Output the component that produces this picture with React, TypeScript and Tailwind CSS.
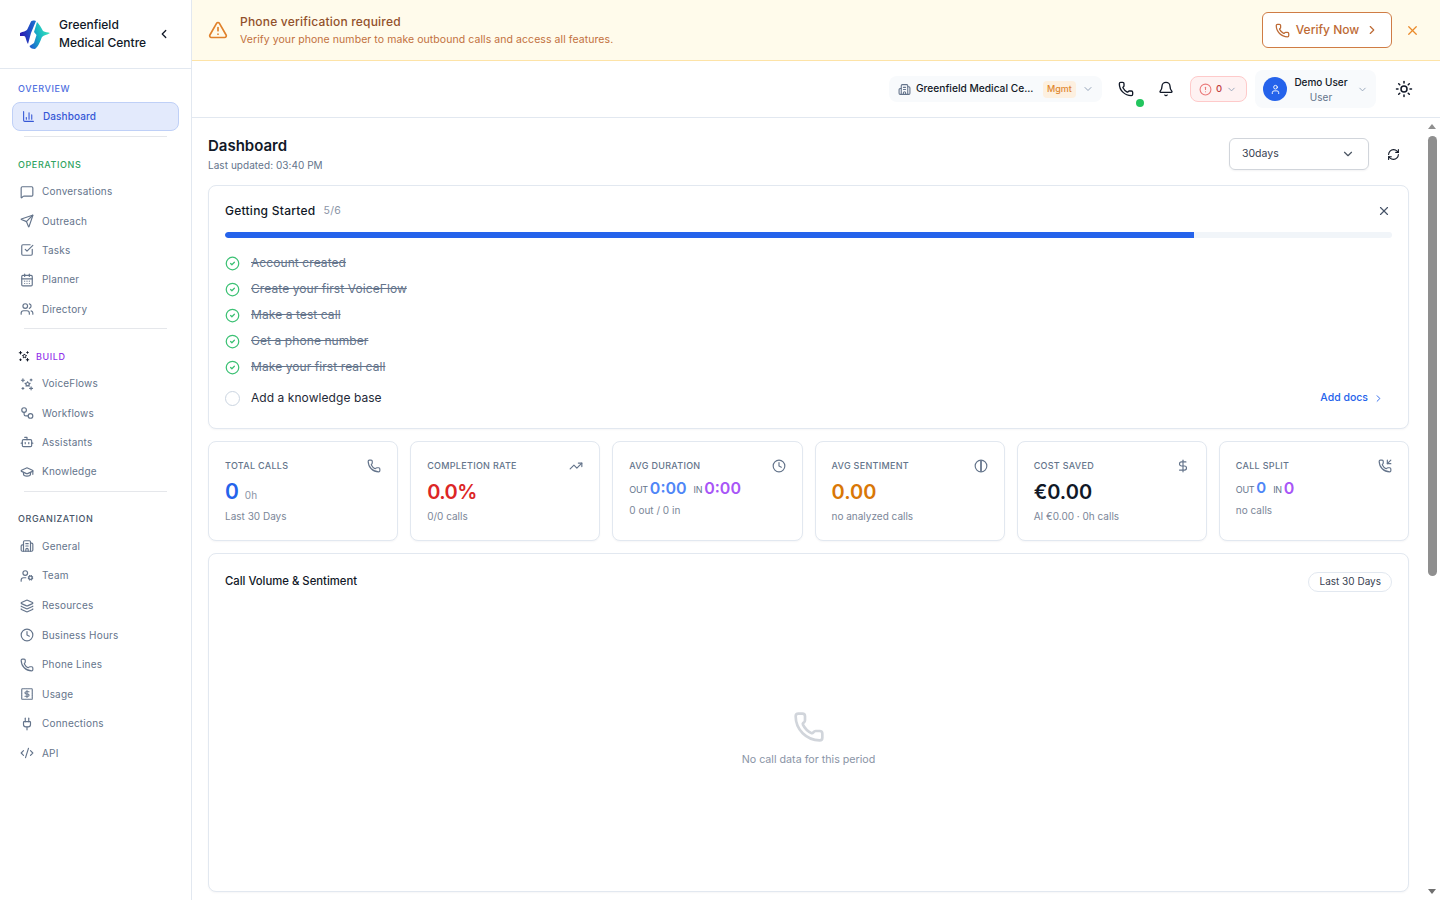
import {
  AlertTriangle, Bell, Bot, Building2, CalendarDays, ChartColumn, ChevronDown, ChevronLeft, ChevronRight,
  CircleAlert, CircleCheck, Clock, CodeXml, DollarSign, GraduationCap, Layers, MessageSquare, Phone,
  PhoneIncoming, Plug, RefreshCw, Send, SquareCheckBig, Sun, TrendingUp, User, UserCog, Users, X,
} from "lucide-react";

function Logo() {
  return (
    <svg width="32" height="32" viewBox="0 0 32 32" fill="none">
      <defs>
        <linearGradient id="lgA" x1="0" y1="0.6" x2="1" y2="0.3">
          <stop offset="0" stopColor="#2a17b0" />
          <stop offset="1" stopColor="#1a6fd0" />
        </linearGradient>
        <linearGradient id="lgB" x1="0" y1="0.8" x2="1" y2="0.3">
          <stop offset="0" stopColor="#1c5fd0" />
          <stop offset="0.5" stopColor="#18b6c4" />
          <stop offset="1" stopColor="#3fe9b8" />
        </linearGradient>
      </defs>
      <path d="M1 15C4 13 7 14 8.500 11L12 3.500C13 2.500 16 2 17 3L12 15L9 26C7 23 7 18 5 18L1 18Z" fill="url(#lgA)" />
      <path d="M18 4C20 6 22 9 24 13C26 14 29 14.500 31 15C28 17 25 17 23 19C21 24 19 29 16 31C13 31 11 30 10.500 28L15 25L17.500 17L15 14Z" fill="url(#lgB)" />
    </svg>
  );
}

function SparkIcon({ size = 14, className = "" }: { size?: number; className?: string }) {
  return (
    <svg width={size} height={size} viewBox="0 0 24 24" fill="none" stroke="currentColor" strokeWidth="2" strokeLinecap="round" className={className}>
      <path d="M13 8.500l1.600 1.900 2.400.6-1.600 2 .2 2.500-2.600-.8-2.400.8.1-2.500L9 11l2.400-.6z" />
      <path d="M5 3v5M2.500 5.500h5M19 3.500v3M17.500 5h3M5 18v3M3.500 19.500h3M19 17v5M16.500 19.500h5" />
    </svg>
  );
}

function FlowIcon({ size = 14 }: { size?: number }) {
  return (
    <svg width={size} height={size} viewBox="0 0 24 24" fill="none" stroke="currentColor" strokeWidth="2" strokeLinecap="round">
      <circle cx="7" cy="7" r="4" />
      <circle cx="18" cy="17" r="4" />
      <path d="M7 11v3a3 3 0 0 0 3 3h4" />
    </svg>
  );
}

function UsageIcon({ size = 14 }: { size?: number }) {
  return (
    <svg width={size} height={size} viewBox="0 0 24 24" fill="none" stroke="currentColor" strokeWidth="2" strokeLinecap="round">
      <rect x="3" y="3" width="18" height="18" rx="1" strokeDasharray="2 1" />
      <path d="M15.500 8H10.500a2 2 0 0 0 0 4h3a2 2 0 0 1 0 4H8.500M12 6v12" strokeWidth="1.800" />
    </svg>
  );
}

function SentimentIcon({ size = 14 }: { size?: number }) {
  return (
    <svg width={size} height={size} viewBox="0 0 24 24" fill="none" stroke="currentColor" strokeWidth="2">
      <circle cx="12" cy="12" r="10" />
      <path d="M12 2v20" strokeWidth="3" />
    </svg>
  );
}

const sections = [
  {
    label: "OPERATIONS",
    color: "text-[#2fa35f]",
    row: "h-[29.4px]",
    items: [
      { name: "Conversations", icon: <MessageSquare size={14} /> },
      { name: "Outreach", icon: <Send size={14} /> },
      { name: "Tasks", icon: <SquareCheckBig size={14} /> },
      { name: "Planner", icon: <CalendarDays size={14} /> },
      { name: "Directory", icon: <Users size={14} /> },
    ],
  },
  {
    label: "BUILD",
    color: "text-[#9333ea]",
    row: "h-[29.4px]",
    spark: true,
    items: [
      { name: "VoiceFlows", icon: <SparkIcon /> },
      { name: "Workflows", icon: <FlowIcon /> },
      { name: "Assistants", icon: <Bot size={14} /> },
      { name: "Knowledge", icon: <GraduationCap size={14} /> },
    ],
  },
  {
    label: "ORGANIZATION",
    color: "text-[#475569]",
    row: "h-[29.6px]",
    items: [
      { name: "General", icon: <Building2 size={14} /> },
      { name: "Team", icon: <UserCog size={14} /> },
      { name: "Resources", icon: <Layers size={14} /> },
      { name: "Business Hours", icon: <Clock size={14} /> },
      { name: "Phone Lines", icon: <Phone size={14} /> },
      { name: "Usage", icon: <UsageIcon /> },
      { name: "Connections", icon: <Plug size={14} /> },
      { name: "API", icon: <CodeXml size={14} /> },
    ],
  },
];

const steps = ["Account created", "Create your first VoiceFlow", "Make a test call", "Get a phone number", "Make your first real call"];

function Sidebar() {
  return (
    <aside className="w-[192px] shrink-0 h-full bg-white border-r border-[#e2e8f0] flex flex-col">
      <div className="h-[69px] shrink-0 border-b border-[#e2e8f0] flex items-center pl-[19px] pr-[20px]">
        <Logo />
        <div className="ml-2 flex-1 text-[12px] leading-[18px] font-medium text-[#111827]">Greenfield<br />Medical Centre</div>
        <ChevronLeft size={14} className="text-[#111827]" strokeWidth={2.2} />
      </div>
      <div className="px-3 flex-1">
        <div className="h-[40px] pl-[6px] pt-[14px] text-[9px] leading-[12px] tracking-[0.6px] font-medium text-[#4f6fe0]">OVERVIEW</div>
        <div className="h-[29px] -mt-[7px] rounded-lg bg-[#e3eafc] border border-[#bfd0f7] flex items-center pl-[9px] gap-[8px] text-[#3557d6]">
          <ChartColumn size={13} />
          <span className="text-[10px] font-medium tracking-[0.1px]">Dashboard</span>
        </div>
        <div className="h-px bg-[#e5e7eb] mx-3 mt-[5px]" />
        {sections.map((s, i) => (
          <div key={s.label}>
            <div className={`h-[13px] mt-[21px] pl-[6px] flex items-center gap-[6px] text-[9px] tracking-[0.6px] font-medium ${s.color}`}>
              {s.spark && <SparkIcon size={12} className="text-[#111827]" />}
              {s.label}
            </div>
            <div className="mt-[6px]">
              {s.items.map(item => (
                <div key={item.name} className={`${s.row} pl-[8px] flex items-center gap-[8px] text-[#64748b]`}>
                  <span className="w-[14px] flex justify-center">{item.icon}</span>
                  <span className="text-[10px] tracking-[0.2px]">{item.name}</span>
                </div>
              ))}
            </div>
            {i < 2 && <div className="h-px bg-[#e5e7eb] mx-3 mt-[4px]" />}
          </div>
        ))}
      </div>
    </aside>
  );
}

function Banner() {
  return (
    <div className="h-[61px] shrink-0 bg-[#fffbeb] border-b border-[#fde3a7] flex items-center pl-4 pr-[20px]">
      <AlertTriangle size={20} className="text-[#e0812b]" />
      <div className="ml-[12px] flex-1">
        <div className="text-[12px] leading-[16px] tracking-[0.2px] font-medium text-[#92512b]">Phone verification required</div>
        <div className="text-[10.5px] leading-[14px] mt-[3px] tracking-[0.07px] text-[#c2703d]">Verify your phone number to make outbound calls and access all features.</div>
      </div>
      <div className="w-[130px] h-[36px] rounded-md bg-white border border-[#cf7c45] flex items-center justify-center gap-[6px] text-[#bd6a35]">
        <Phone size={15} />
        <span className="text-[12px] font-medium">Verify Now</span>
        <ChevronRight size={14} />
      </div>
      <X size={15} className="ml-[13px] text-[#ea8a2a]" />
    </div>
  );
}

function TopBar() {
  return (
    <div className="h-[57px] shrink-0 bg-white border-b border-[#e2e8f0] flex items-center justify-end pr-[27px]">
      <div className="w-[213px] h-[26px] rounded-lg bg-[#f8fafc] flex items-center pl-[9px] text-[#111827]">
        <Building2 size={13} className="text-[#64748b]" />
        <span className="ml-[5px] text-[10.2px] font-medium w-[119px] whitespace-nowrap">Greenfield Medical Ce...</span>
        <span className="ml-[8px] h-[17px] px-[4px] rounded bg-[#fdf0e0] text-[#e0882f] text-[9px] font-medium flex items-center">Mgmt</span>
        <ChevronDown size={12} className="ml-[6px] text-[#94a3b8]" />
      </div>
      <div className="relative ml-[16px] w-[16px] h-[16px] text-[#111827]">
        <Phone size={16} />
        <span className="absolute left-[18px] top-[18px] w-[8px] h-[8px] rounded-full bg-[#22c55e]" />
      </div>
      <Bell size={16} className="ml-[24px] text-[#111827]" />
      <div className="ml-[16px] w-[57px] h-[26px] rounded-lg bg-[#fef2f2] border border-[#fecaca] flex items-center pl-[8px] text-[#c2413f]">
        <CircleAlert size={13} className="text-[#ea7a7a]" />
        <span className="ml-[4px] text-[9.5px] font-medium">0</span>
        <ChevronDown size={11} className="ml-[4px] text-[#94a3b8]" />
      </div>
      <div className="ml-[8px] w-[121px] h-[38px] rounded-lg bg-[#f8fafc] flex items-center pl-[8px]">
        <span className="w-[24px] h-[24px] rounded-full bg-[#2563eb] flex items-center justify-center text-white">
          <User size={11} />
        </span>
        <div className="ml-[7px] w-[54px] text-center whitespace-nowrap">
          <div className="text-[10px] leading-[14px] font-medium text-[#111827]">Demo User</div>
          <div className="text-[10px] leading-[14px] mt-[1px] text-[#64748b]">User</div>
        </div>
        <ChevronDown size={11} className="ml-[9px] text-[#94a3b8]" />
      </div>
      <Sun size={18} className="ml-[19px] text-[#111827]" />
    </div>
  );
}

function GettingStarted() {
  return (
    <div className="h-[244px] rounded-lg border border-[#e2e8f0] bg-white px-4 pt-[15px] shadow-[0_1px_2px_rgba(15,23,42,0.04)]">
      <div className="h-[20px] flex items-center">
        <span className="text-[12px] tracking-[0.25px] font-medium text-[#111827]">Getting Started</span>
        <span className="ml-2 text-[10.5px] tracking-[0.3px] text-[#8a94a6]">5/6</span>
        <X size={14} className="ml-auto mr-[1px] text-[#475569]" />
      </div>
      <div className="mt-[11px] h-[6px] rounded-full bg-[#f1f5f9] overflow-hidden">
        <div className="h-full w-[83%] rounded-l-full bg-[#2563eb]" />
      </div>
      <div className="mt-[12px]">
        {steps.map(s => (
          <div key={s} className="h-[26px] flex items-center">
            <CircleCheck size={15} className="text-[#3cc174]" />
            <span className="ml-[11px] text-[12px] tracking-[0.08px] text-[#64748b] line-through">{s}</span>
          </div>
        ))}
        <div className="h-[36px] flex items-center">
          <span className="w-[15px] h-[15px] rounded-full border border-[#cbd5e1]" />
          <span className="ml-[11px] text-[12px] tracking-[0.06px] text-[#1f2937]">Add a knowledge base</span>
          <span className="ml-auto text-[10.5px] font-medium text-[#2563eb]">Add docs</span>
          <ChevronRight size={11} className="ml-[5px] mr-[8px] text-[#2563eb]" />
        </div>
      </div>
    </div>
  );
}

function Stat({ label, icon, children }: { label: string; icon: React.ReactNode; children: React.ReactNode }) {
  return (
    <div className="h-[100px] rounded-lg border border-[#e2e8f0] bg-white pl-4 pr-4 pt-[15px] shadow-[0_1px_2px_rgba(15,23,42,0.04)]">
      <div className="h-[18px] flex items-center justify-between text-[#64748b]">
        <span className="text-[9px] font-medium tracking-[0.3px]">{label}</span>
        {icon}
      </div>
      {children}
    </div>
  );
}

function Split({ a, b, big }: { a: string; b: string; big?: boolean }) {
  return (
    <div className="mt-[1px] h-[24px] flex items-center">
      <span className="mt-[3px] text-[9px] tracking-[-0.3px] text-[#64748b]">OUT</span>
      <span className={`ml-[2px] font-semibold text-[#4f86f7] ${big ? "text-[16px]" : "text-[15px]"}`}>{a}</span>
      <span className="ml-[7px] mt-[3px] text-[9px] tracking-[-0.3px] text-[#64748b]">IN</span>
      <span className="ml-[2px] font-semibold text-[#a855f7] text-[16px]">{b}</span>
    </div>
  );
}

function ScrollBar() {
  return (
    <div className="w-[15px] shrink-0 bg-white flex flex-col items-center pt-[6px] pb-[6px] pr-[1px]">
      <span className="w-0 h-0 border-x-[4px] border-x-transparent border-b-[5px] border-b-[#8f8f8f]" />
      <div className="mt-[7px] h-[440px] w-[9px] rounded-full bg-[#8f8f8f]" />
      <span className="mt-auto w-0 h-0 border-x-[4px] border-x-transparent border-t-[5px] border-t-[#6f6f6f]" />
    </div>
  );
}

export default function App() {
  return (
    <div className="h-screen w-full flex overflow-hidden bg-white [font-family:Inter,sans-serif]">
      <Sidebar />
      <div className="flex-1 min-w-0 h-full flex flex-col">
        <Banner />
        <TopBar />
        <div className="flex-1 min-h-0 flex">
          <main className="flex-1 min-w-0 overflow-y-auto px-4 pt-5 pb-4">
            <div className="h-[32px] mb-[15px] flex items-center">
              <div className="flex-1 -mt-[1px]">
                <h1 className="text-[15px] leading-[20px] font-semibold text-[#111827]">Dashboard</h1>
                <p className="text-[10px] leading-[14px] mt-[2px] tracking-[0.05px] text-[#64748b]">Last updated: 03:40 PM</p>
              </div>
              <div className="w-[140px] h-[32px] rounded-md border border-[#d1d5db] flex items-center justify-between pl-3 pr-[13px] text-[#374151] shadow-[0_1px_2px_rgba(15,23,42,0.05)]">
                <span className="text-[10.5px]">30days</span>
                <ChevronDown size={14} className="text-[#4b5563]" />
              </div>
              <RefreshCw size={13} className="ml-[18px] mr-[9px] text-[#111827]" />
            </div>
            <GettingStarted />
            <div className="mt-3 grid grid-cols-6 gap-3">
              <Stat label="TOTAL CALLS" icon={<Phone size={14} />}>
                <div className="mt-[4px] h-[26px] flex items-center">
                  <span className="text-[21px] font-semibold text-[#2563eb]">0</span>
                  <span className="ml-[6px] mt-[6px] text-[10px] text-[#8a94a6]">0h</span>
                </div>
                <div className="mt-[4px] text-[10px] leading-[14px] text-[#7b8698]">Last 30 Days</div>
              </Stat>
              <Stat label="COMPLETION RATE" icon={<TrendingUp size={14} />}>
                <div className="mt-[4px] h-[26px] flex items-center text-[20px] tracking-[-0.5px] font-semibold text-[#dc2626]">0.0%</div>
                <div className="mt-[4px] text-[10px] leading-[14px] text-[#7b8698]">0/0 calls</div>
              </Stat>
              <Stat label="AVG DURATION" icon={<Clock size={14} />}>
                <Split a="0:00" b="0:00" big />
                <div className="mt-[3px] text-[10px] leading-[14px] text-[#7b8698]">0 out / 0 in</div>
              </Stat>
              <Stat label="AVG SENTIMENT" icon={<SentimentIcon />}>
                <div className="mt-[4px] h-[26px] flex items-center text-[20px] font-semibold text-[#d97706]">0.00</div>
                <div className="mt-[4px] text-[10px] leading-[14px] text-[#7b8698]">no analyzed calls</div>
              </Stat>
              <Stat label="COST SAVED" icon={<DollarSign size={14} />}>
                <div className="mt-[4px] h-[26px] flex items-center text-[20px] font-semibold text-[#111827]">€0.00</div>
                <div className="mt-[4px] text-[10px] leading-[14px] text-[#7b8698]">AI €0.00 · 0h calls</div>
              </Stat>
              <Stat label="CALL SPLIT" icon={<PhoneIncoming size={14} />}>
                <Split a="0" b="0" />
                <div className="mt-[3px] text-[10px] leading-[14px] text-[#7b8698]">no calls</div>
              </Stat>
            </div>
            <div className="mt-3 h-[339px] rounded-lg border border-[#e2e8f0] bg-white px-4 pt-[17px] shadow-[0_1px_2px_rgba(15,23,42,0.04)]">
              <div className="h-[21px] flex items-center justify-between">
                <span className="text-[11.3px] font-medium text-[#111827]">Call Volume &amp; Sentiment</span>
                <span className="h-[20px] px-[10px] rounded-full border border-[#e2e8f0] flex items-center text-[10px] text-[#374151]">Last 30 Days</span>
              </div>
              <div className="mt-[119px] flex flex-col items-center">
                <Phone size={32} className="text-[#d1d5db]" />
                <p className="mt-[9px] text-[10.7px] text-[#8a94a6]">No call data for this period</p>
              </div>
            </div>
            <div className="mt-3 h-[416px] rounded-lg border border-[#e2e8f0] bg-white" />
          </main>
          <ScrollBar />
        </div>
      </div>
    </div>
  );
}
